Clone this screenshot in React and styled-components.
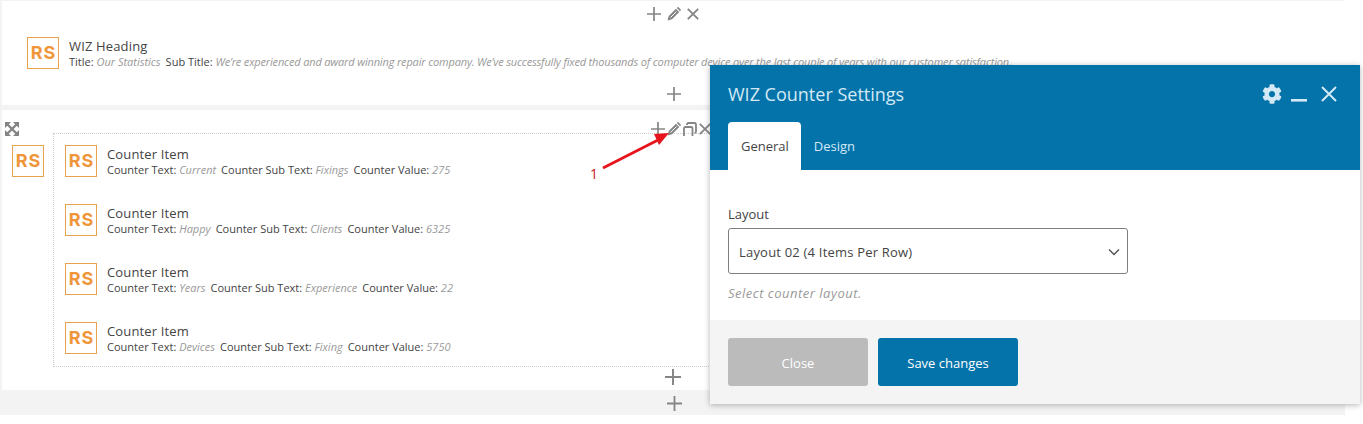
import React from 'react';
import styled, { createGlobalStyle } from 'styled-components';
import { FaCog } from 'react-icons/fa';

const GlobalStyle = createGlobalStyle`
	html, body {
		margin: 0;
		padding: 0;
		background: #fff;
		font-family: "Open Sans", "Noto Sans", sans-serif;
		color: #444;
	}
`;

const Page = styled.div`
	position: relative;
	width: 1363px;
	height: 424px;
	overflow: hidden;
`;

const Editor = styled.div`
	position: relative;
	width: 1345px;
	height: 415px;
	padding: 1px 0 0 2px;
	box-sizing: border-box;
	background: #f3f3f3;
	display: flex;
	flex-direction: column;
	gap: 5px;
`;

const Block = styled.section`
	position: relative;
	background: #fff;
	height: ${(p) => p.$height}px;
	flex-shrink: 0;
`;

const HeadingRow = styled.div`
	display: flex;
	gap: 10px;
	padding: 36px 0 0 25px;
`;

const RowBlock = styled.div`
	display: flex;
	align-items: flex-start;
	padding: 23px 0 0 10px;
	gap: 9px;
`;

const ItemList = styled.div`
	flex: 1;
	height: 234px;
	box-sizing: border-box;
	border: 1px dotted #ccc;
	border-right: 0;
	padding: 11px 0 0 11px;
	display: flex;
	flex-direction: column;
	gap: 27px;
`;

const Item = styled.div`
	display: flex;
	gap: 10px;
`;

const Logo = styled.div`
	width: 32px;
	height: 32px;
	box-sizing: border-box;
	flex-shrink: 0;
	margin-top: ${(p) => p.$offset || 0}px;
	padding-left: 1px;
	border: 1px solid #e8a14d;
	display: flex;
	align-items: center;
	justify-content: center;
	color: #f0963a;
	font: 700 18px/1 "Inter", "Open Sans", sans-serif;
	letter-spacing: 1px;
	background: #fff;
`;

const ItemText = styled.div`
	padding-top: 1px;
	white-space: nowrap;
`;

const ItemTitle = styled.div`
	font-size: 13px;
	line-height: 17px;
	letter-spacing: 0.15px;
	color: #444;
`;

const Params = styled.div`
	font-size: 11px;
	line-height: 14px;
	color: #444;
	display: flex;
	gap: 5px;
`;

const ParamValue = styled.em`
	color: #999;
	letter-spacing: ${(p) => (p.$tight ? '-0.16px' : '0')};
`;

const IconBar = styled.div`
	position: absolute;
	left: ${(p) => p.$left}px;
	top: ${(p) => p.$top}px;
	display: flex;
	align-items: center;
	gap: ${(p) => p.$gap || 6}px;
	color: #858585;
	line-height: 0;
`;

const Plus = ({ size = 14 }) => (
	<svg width={size} height={size} viewBox="0 0 14 14" stroke="currentColor" strokeWidth="1.7" fill="none">
		<path d="M7 0v14M0 7h14" />
	</svg>
);

const Pencil = () => (
	<svg width="14" height="14" viewBox="0 0 14 14" fill="currentColor">
		<path d="M0.500 13.500l1.200-4.600L8.900 1.700l3.400 3.400-7.200 7.200z" />
		<path d="M9.800 0.900l0.700-0.600q0.500-0.400 1 0l2.200 2.200q0.400 0.500 0 1l-0.700 0.700z" />
		<path d="M3.500 10.500L9.500 4.500" stroke="#fff" strokeWidth="1" />
	</svg>
);

const Cross = () => (
	<svg width="12" height="12" viewBox="0 0 12 12" stroke="currentColor" strokeWidth="1.800" fill="none">
		<path d="M0.800 0.800l10.400 10.400M11.200 0.800L0.800 11.200" />
	</svg>
);

const Copy = () => (
	<svg width="14" height="14" viewBox="0 0 14 14" stroke="currentColor" strokeWidth="1.800" fill="none">
		<path d="M1 14V6.500Q1 5 2.500 5H8Q9.500 5 9.500 6.500V14" />
		<path d="M4 3V2.500Q4 1 5.500 1H11.500Q13 1 13 2.500V9.500Q13 11 11.500 11" />
	</svg>
);

const Expand = () => (
	<svg width="14" height="14" viewBox="0 0 14 14" fill="#858585">
		<path d="M0 0h6L0 6zM14 0v6L8 0zM0 14V8l6 6zM14 14H8l6-6z" />
		<path d="M2 2l10 10M12 2L2 12" stroke="#858585" strokeWidth="2.400" />
	</svg>
);

const Marker = styled.svg`
	position: absolute;
	left: 600px;
	top: 130px;
`;

const MarkerLabel = styled.span`
	position: absolute;
	left: 590px;
	top: 165px;
	font-size: 14px;
	line-height: 18px;
	color: #c8161d;
`;

const Modal = styled.div`
	position: absolute;
	left: 710px;
	top: 65px;
	width: 650px;
	height: 339px;
	display: flex;
	flex-direction: column;
	background: #fff;
	box-shadow: 0 1px 6px rgba(0, 0, 0, 0.3);
`;

const ModalHeader = styled.header`
	height: 105px;
	flex-shrink: 0;
	box-sizing: border-box;
	background: #0473aa;
	color: #d3e9f5;
	padding: 15px 21px 0 18px;
	display: flex;
	flex-direction: column;
	justify-content: space-between;
`;

const TitleRow = styled.div`
	display: flex;
	justify-content: space-between;
	align-items: center;
`;

const ModalTitle = styled.h2`
	margin: 0;
	font-size: 18px;
	line-height: 28px;
	font-weight: 400;
	color: #d3e9f5;
`;

const HeaderTools = styled.div`
	display: flex;
	align-items: center;
	gap: 12px;
	line-height: 0;
	color: #d3e9f5;

	svg:first-child {
		margin-right: -3px;
	}
`;

const Tabs = styled.div`
	display: flex;
`;

const Tab = styled.div`
	height: 48px;
	box-sizing: border-box;
	padding: 0 12px 0 13px;
	display: flex;
	align-items: center;
	font-size: 13px;
	border-radius: 4px 4px 0 0;
	background: ${(p) => (p.$active ? '#fff' : 'transparent')};
	color: ${(p) => (p.$active ? '#444' : '#d3e9f5')};
`;

const ModalBody = styled.div`
	flex: 1;
	padding: 35px 18px 0;
`;

const FieldLabel = styled.label`
	display: block;
	font-size: 13px;
	line-height: 18px;
	color: #444;
	margin-bottom: 5px;
`;

const SelectBox = styled.div`
	width: 400px;
	height: 46px;
	box-sizing: border-box;
	border: 1px solid #7e7e7e;
	border-radius: 3px;
	padding: 2px 7px 0 10px;
	display: flex;
	align-items: center;
	justify-content: space-between;
	font-size: 13px;
	letter-spacing: 0.2px;
	color: #444;
`;

const Hint = styled.p`
	margin: 10px 0 0;
	font-size: 13px;
	line-height: 18px;
	letter-spacing: 0.5px;
	font-style: italic;
	color: #999;
`;

const ModalFooter = styled.footer`
	height: 84px;
	flex-shrink: 0;
	box-sizing: border-box;
	background: #f4f4f4;
	padding: 18px;
	display: flex;
	gap: 10px;
`;

const Button = styled.button`
	width: 140px;
	height: 48px;
	padding: 2px 0 0;
	border: 0;
	border-radius: 3px;
	font: 400 13px "Open Sans", sans-serif;
	color: #fff;
	background: ${(p) => (p.$primary ? '#0473aa' : '#bbb')};
`;

const params = [
	['Current', 'Fixings', '275'],
	['Happy', 'Clients', '6325'],
	['Years', 'Experience', '22'],
	['Devices', 'Fixing', '5750'],
];

export default function App() {
	return (
		<Page>
			<GlobalStyle />
			<Editor>
				<Block $height={104}>
					<HeadingRow>
						<Logo>RS</Logo>
						<ItemText>
							<ItemTitle>WIZ Heading</ItemTitle>
							<Params>
								<span>Title: <ParamValue>Our Statistics</ParamValue></span>
								<span>Sub Title: <ParamValue $tight>We’re experienced and award winning repair company. We’ve successfully fixed thousands of computer device over the last couple of years with our customer satisfaction.</ParamValue></span>
							</Params>
						</ItemText>
					</HeadingRow>
					<IconBar $left={645} $top={6}>
						<Plus />
						<Pencil />
						<Cross />
					</IconBar>
					<IconBar $left={665} $top={86}>
						<Plus />
					</IconBar>
				</Block>
				<Block $height={280}>
					<RowBlock>
						<Logo $offset={12}>RS</Logo>
						<ItemList>
							{params.map(([text, sub, value]) => (
								<Item key={text}>
									<Logo>RS</Logo>
									<ItemText>
										<ItemTitle>Counter Item</ItemTitle>
										<Params>
											<span>Counter Text: <ParamValue>{text}</ParamValue></span>
											<span>Counter Sub Text: <ParamValue>{sub}</ParamValue></span>
											<span>Counter Value: <ParamValue>{value}</ParamValue></span>
										</Params>
									</ItemText>
								</Item>
							))}
						</ItemList>
					</RowBlock>
					<IconBar $left={3} $top={12}>
						<Expand />
					</IconBar>
					<IconBar $left={649} $top={12} $gap={2}>
						<Plus />
						<Pencil />
						<Copy />
						<Cross />
					</IconBar>
					<IconBar $left={663} $top={259}>
						<Plus size={16} />
					</IconBar>
				</Block>
				<IconBar $left={667} $top={396}>
					<Plus size={15} />
				</IconBar>
			</Editor>
			<Marker width="72" height="42" viewBox="0 0 72 42">
				<path d="M3 38L60 9" stroke="#e8141c" strokeWidth="2.800" fill="none" />
				<path d="M69 3L54 4 59 15z" fill="#e8141c" />
			</Marker>
			<MarkerLabel>1</MarkerLabel>
			<Modal>
				<ModalHeader>
					<TitleRow>
						<ModalTitle>WIZ Counter Settings</ModalTitle>
						<HeaderTools>
							<FaCog size={20} />
							<svg width="16" height="20" viewBox="0 0 16 20" fill="currentColor">
								<path d="M0 15h16v2.600H0z" />
							</svg>
							<svg width="20" height="20" viewBox="0 0 20 20" stroke="currentColor" strokeWidth="2" fill="none">
								<path d="M3 3l14 14M17 3L3 17" />
							</svg>
						</HeaderTools>
					</TitleRow>
					<Tabs>
						<Tab $active>General</Tab>
						<Tab>Design</Tab>
					</Tabs>
				</ModalHeader>
				<ModalBody>
					<FieldLabel>Layout</FieldLabel>
					<SelectBox>
						Layout 02 (4 Items Per Row)
						<svg width="12" height="8" viewBox="0 0 12 8" stroke="#555" strokeWidth="1.500" fill="none">
							<path d="M1 1.500l5 5 5-5" />
						</svg>
					</SelectBox>
					<Hint>Select counter layout.</Hint>
				</ModalBody>
				<ModalFooter>
					<Button>Close</Button>
					<Button $primary>Save changes</Button>
				</ModalFooter>
			</Modal>
		</Page>
	);
}
